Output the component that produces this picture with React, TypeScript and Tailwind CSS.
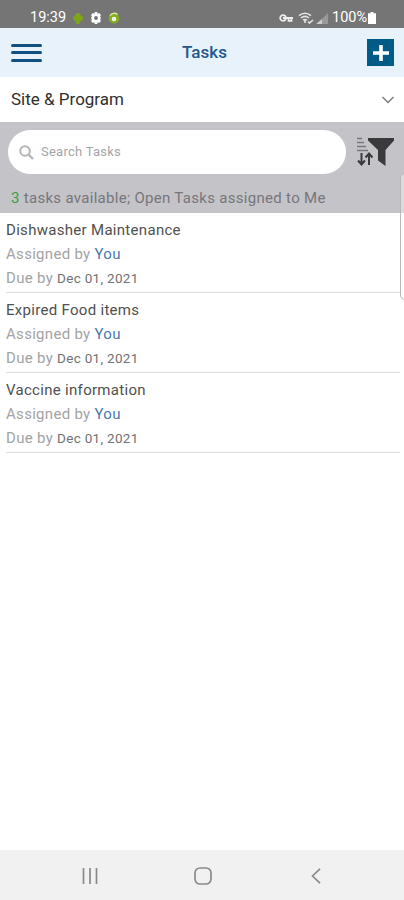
import React from 'react';

const TASKS = [
  { id: 1, title: 'Dishwasher Maintenance', assignee: 'You', due: 'Dec 01, 2021' },
  { id: 2, title: 'Expired Food items', assignee: 'You', due: 'Dec 01, 2021' },
  { id: 3, title: 'Vaccine information', assignee: 'You', due: 'Dec 01, 2021' },
];

const StatusBar = () => (
  <div className="h-7 shrink-0 bg-[#757575] flex items-end justify-between pl-[30px] pr-7 text-white">
    <div className="flex items-center h-5">
      <span className="w-[37px] text-[14.5px] leading-5 whitespace-nowrap">19:39</span>
      {/* Android robot */}
      <svg className="w-3 h-3 ml-[5px]" viewBox="0 0 12 12" fill="#7da719">
        <path d="M3 4.2C3 2.3 4.3 1 6 1s3 1.3 3 3.2h1.8v4H9v1.3H7.8V12H4.2V9.5H3V8.2H1.2v-4z" />
      </svg>
      <svg className="w-3 h-3 ml-1.5" viewBox="0 0 12 12">
        <path d="M4.8 0h2.4l.4 1.7 1.6-.6 1.7 2-.8 1.5.9 1.4-.9 1.4.8 1.5-1.7 2-1.6-.6-.4 1.7H4.8l-.4-1.7-1.6.6-1.7-2 .8-1.5L1 6l.9-1.4-.8-1.5 1.7-2 1.6.6z" fill="#fff" />
        <circle cx="6" cy="6" r="1.9" fill="#757575" />
      </svg>
      <svg className="w-3 h-3 ml-1.5" viewBox="0 0 12 12">
        <circle cx="6" cy="6.2" r="5.4" fill="#83ad20" />
        <path d="M2 3.5Q5.5-.5 9.6 2.5" fill="none" stroke="#dce99b" strokeWidth="1.4" />
        <circle cx="6" cy="7" r="2.3" fill="#f4f8e6" />
      </svg>
    </div>
    <div className="flex items-center h-5">
      {/* VPN key */}
      <svg className="w-[15px] h-2.5" viewBox="0 0 15 10" fill="none" stroke="#eee" strokeWidth="1.8">
        <circle cx="4" cy="5" r="2.8" />
        <path d="M4 5h10M9.5 5v2.8h3V5" />
      </svg>
      <svg className="w-4 h-3 ml-1" viewBox="0 0 16 12" fill="none" stroke="#e6e6e6" strokeWidth="1.6">
        <path d="M1 3.6Q7-1.2 13 3.6M3 6Q7 2.8 11 6M5 8.2Q7 6.7 9 8.2" />
        <path d="M7 8v3M10 9.5l1.5 1.5L15 8" />
      </svg>
      <svg className="w-3 h-3 ml-0.5" viewBox="0 0 12 12">
        <path d="M0 12 6 7v5z" fill="#ccc" />
        <path d="M6 7V12h6V1z" fill="#999" />
      </svg>
      <span className="w-[36px] ml-1 text-[14.5px] leading-5 whitespace-nowrap">100%</span>
      <svg className="w-2 h-3" viewBox="0 0 8 12" fill="#fff">
        <path d="M2.5 0h3v1.3H8V12H0V1.3h2.5z" />
      </svg>
    </div>
  </div>
);

const Header = () => (
  <header className="h-[49px] shrink-0 bg-[#e8f2fa] flex items-center justify-between pl-[11px] pr-[10px]">
    <button className="w-[31px] flex flex-col gap-[4.5px]">
      <span className="h-[3px] rounded-full bg-[#105080]" />
      <span className="h-[3px] rounded-full bg-[#105080]" />
      <span className="h-[3px] rounded-full bg-[#105080]" />
    </button>
    <h1 className="text-[17px] font-medium text-[#24588a] pl-0">Tasks</h1>
    <button className="w-[27px] h-[27px] bg-[#005b87] flex items-center justify-center">
      <svg className="w-4 h-4" viewBox="0 0 16 16" stroke="#fff" strokeWidth="3.6">
        <path d="M8 0v16M0 8h16" />
      </svg>
    </button>
  </header>
);

const FilterIcon = () => (
  <svg className="w-[38px] h-[30px]" viewBox="0 0 38 30" fill="none">
    <path d="M0 1.5h5M0 5.5h7M0 9.5h9M0 13.5h11" stroke="#77777a" strokeWidth="1.5" />
    <path d="M4.5 16v11M1 23.5l3.5 4 3.5-4M12 28V17M8.5 20.5l3.5-4 3.5 4" stroke="#3a3a3c" strokeWidth="2" />
    <path d="M11 1h26v2.5L28.500 13v16L21 23.500V13L11 3.500z" fill="#3a3a3c" />
  </svg>
);

const SearchPanel = () => (
  <section className="h-[91px] shrink-0 bg-[#c4c3c8]">
    <div className="flex items-center pt-2 pl-2">
      <div className="w-[338px] h-11 rounded-full bg-white flex items-center pl-[11px] gap-[7px]">
        <svg className="w-[15px] h-[15px]" viewBox="0 0 15 15" fill="none" stroke="#b5b5b5" strokeWidth="2">
          <circle cx="6" cy="6" r="4.8" />
          <path d="m9.500 9.500 4.500 4.500" strokeWidth="2.4" />
        </svg>
        <span className="text-[13px] text-[#a5a5a5] tracking-[0.25px]">Search Tasks</span>
      </div>
      <button className="ml-[11px]">
        <FilterIcon />
      </button>
    </div>
    <p className="pl-[11px] mt-[14px] text-[15px] leading-5 text-[#77767b] tracking-[0.3px] whitespace-nowrap">
      <span className="text-[#35a044]">3</span> tasks available; Open Tasks assigned to Me
    </p>
  </section>
);

export default function App() {
  return (
    <div className="relative w-full h-[900px] bg-white flex flex-col overflow-hidden font-['Roboto',sans-serif]">
      <StatusBar />
      <Header />

      <div className="h-[45px] shrink-0 flex items-center justify-between pl-[11px] pr-[10px]">
        <span className="text-[17px] text-[#303030]">Site &amp; Program</span>
        <svg className="w-3 h-2" viewBox="0 0 12 8" fill="none" stroke="#777" strokeWidth="1.4">
          <path d="m.5 1 5.500 5.500L11.500 1" />
        </svg>
      </div>

      <SearchPanel />

      <main className="flex-1 pl-1.5 pr-1">
        {TASKS.map((task) => (
          <article key={task.id} className="h-20 pt-[5px] border-b border-[#dcdcdc] text-[15px] leading-6 whitespace-nowrap">
            <h2 className="text-[#505050] tracking-[0.3px]">{task.title}</h2>
            <p className="text-[#a3a3a3] tracking-[0.3px]">
              Assigned by <span className="text-[#467aae]">{task.assignee}</span>
            </p>
            <p className="text-[#a3a3a3] tracking-[0.3px]">
              Due by <span className="text-[13.5px] text-[#727272]">{task.due}</span>
            </p>
          </article>
        ))}
      </main>

      <nav className="h-[50px] shrink-0 bg-[#f1f1f1] flex items-center pl-[82px] pt-0.5">
        <svg className="w-4 h-4" viewBox="0 0 16 16" stroke="#8a8a8a" strokeWidth="1.7">
          <path d="M1.500 0v16M8 0v16M14.500 0v16" />
        </svg>
        <svg className="w-[18px] h-[18px] ml-[96px]" viewBox="0 0 18 18" fill="none" stroke="#8a8a8a" strokeWidth="1.7">
          <rect x="1" y="1" width="16" height="16" rx="5" />
        </svg>
        <svg className="w-2.5 h-4 ml-[99px]" viewBox="0 0 10 16" fill="none" stroke="#8a8a8a" strokeWidth="1.7">
          <path d="M9 .8 1.500 8 9 15.200" />
        </svg>
      </nav>

      {/* Edge panel handle */}
      <div className="absolute left-[400px] top-[173px] w-3 h-[127px] rounded-l-[5px] border border-[#b8b8b8] bg-white/40" />
    </div>
  );
}
